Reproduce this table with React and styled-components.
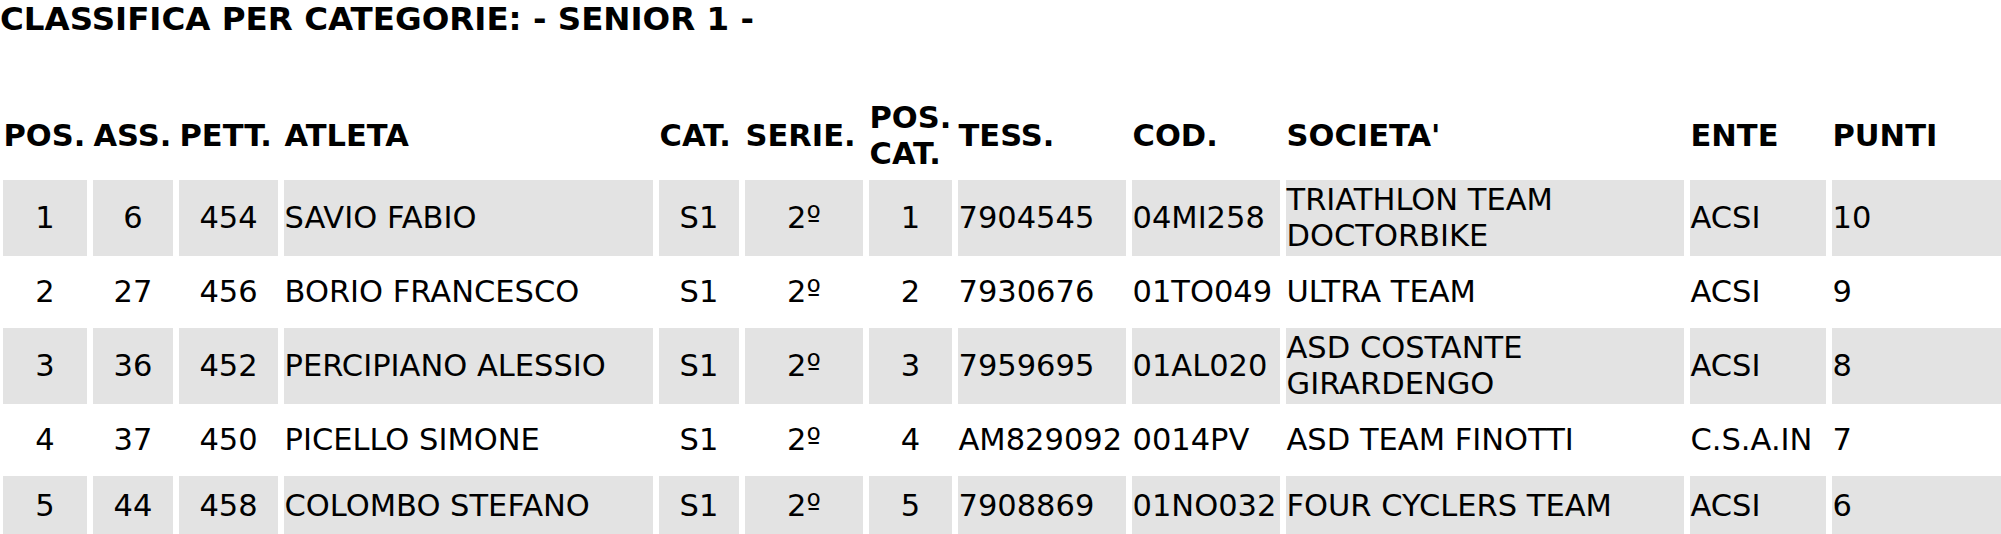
import styled, { createGlobalStyle } from 'styled-components'

const GlobalStyle = createGlobalStyle`
    html, body {
        margin: 0;
        padding: 0;
        background: #fff;
        overflow: hidden;
    }
    body {
        font-family: Verdana, 'DejaVu Sans', sans-serif;
        color: #000;
    }
`

const columns = [
    { key: 'pos', label: 'POS.', width: 90, align: 'center' },
    { key: 'ass', label: 'ASS.', width: 86, align: 'center' },
    { key: 'pett', label: 'PETT.', width: 105, align: 'center' },
    { key: 'atleta', label: 'ATLETA', width: 375, align: 'left' },
    { key: 'cat', label: 'CAT.', width: 86, align: 'center' },
    { key: 'serie', label: 'SERIE.', width: 124, align: 'center' },
    { key: 'posCat', label: 'POS. CAT.', width: 89, align: 'center' },
    { key: 'tess', label: 'TESS.', width: 174, align: 'left' },
    { key: 'cod', label: 'COD.', width: 154, align: 'left' },
    { key: 'societa', label: "SOCIETA'", width: 404, align: 'left' },
    { key: 'ente', label: 'ENTE', width: 142, align: 'left' },
    { key: 'punti', label: 'PUNTI', width: 175, align: 'left' },
]

const rows = [
    { pos: 1, ass: 6, pett: 454, atleta: 'SAVIO FABIO', cat: 'S1', serie: '2º', posCat: 1, tess: '7904545', cod: '04MI258', societa: 'TRIATHLON TEAM DOCTORBIKE', ente: 'ACSI', punti: 10 },
    { pos: 2, ass: 27, pett: 456, atleta: 'BORIO FRANCESCO', cat: 'S1', serie: '2º', posCat: 2, tess: '7930676', cod: '01TO049', societa: 'ULTRA TEAM', ente: 'ACSI', punti: 9 },
    { pos: 3, ass: 36, pett: 452, atleta: 'PERCIPIANO ALESSIO', cat: 'S1', serie: '2º', posCat: 3, tess: '7959695', cod: '01AL020', societa: 'ASD COSTANTE GIRARDENGO', ente: 'ACSI', punti: 8 },
    { pos: 4, ass: 37, pett: 450, atleta: 'PICELLO SIMONE', cat: 'S1', serie: '2º', posCat: 4, tess: 'AM829092', cod: '0014PV', societa: 'ASD TEAM FINOTTI', ente: 'C.S.A.IN', punti: 7 },
    { pos: 5, ass: 44, pett: 458, atleta: 'COLOMBO STEFANO', cat: 'S1', serie: '2º', posCat: 5, tess: '7908869', cod: '01NO032', societa: 'FOUR CYCLERS TEAM', ente: 'ACSI', punti: 6 },
]

const App = () => {
    const tableWidth = columns.reduce((sum, c) => sum + c.width, 0)

    return (
        <>
            <GlobalStyle />
            <Title>CLASSIFICA PER CATEGORIE: - SENIOR 1 -</Title>
            <Table $width={tableWidth}>
                <colgroup>
                    {columns.map((c) => (
                        <Col key={c.key} $width={c.width} />
                    ))}
                </colgroup>
                <thead>
                    <HeadRow>
                        {columns.map((c) => (
                            <HeadCell key={c.key}>{c.label}</HeadCell>
                        ))}
                    </HeadRow>
                </thead>
                <tbody>
                    {rows.map((r, i) => (
                        <Row key={r.pos}>
                            {columns.map((c) => (
                                <Cell key={c.key} $align={c.align} $shaded={i % 2 === 0}>
                                    {r[c.key]}
                                </Cell>
                            ))}
                        </Row>
                    ))}
                </tbody>
            </Table>
        </>
    )
}

export default App

const Title = styled.h1`
    margin: 0 0 57px 0;
    font-size: 32.5px;
    line-height: 38px;
    font-weight: bold;
`

const Table = styled.table`
    width: ${(p) => p.$width}px;
    table-layout: fixed;
    border-collapse: separate;
    border-spacing: 0;
`

const Col = styled.col`
    width: ${(p) => p.$width}px;
`

const HeadRow = styled.tr`
    height: 82px;
`

const HeadCell = styled.th`
    border: 3px solid #fff;
    padding: 1.5px 0.5px;
    font-size: 30.5px;
    line-height: 36.5px;
    font-weight: bold;
    text-align: left;
    vertical-align: middle;
`

const Row = styled.tr`
    height: 66px;
`

const Cell = styled.td`
    border: 3px solid #fff;
    padding: 1.5px 0.5px;
    background: ${(p) => (p.$shaded ? '#e3e3e3' : '#fff')};
    font-size: 30.5px;
    line-height: 36.5px;
    text-align: ${(p) => p.$align};
    vertical-align: middle;
`
